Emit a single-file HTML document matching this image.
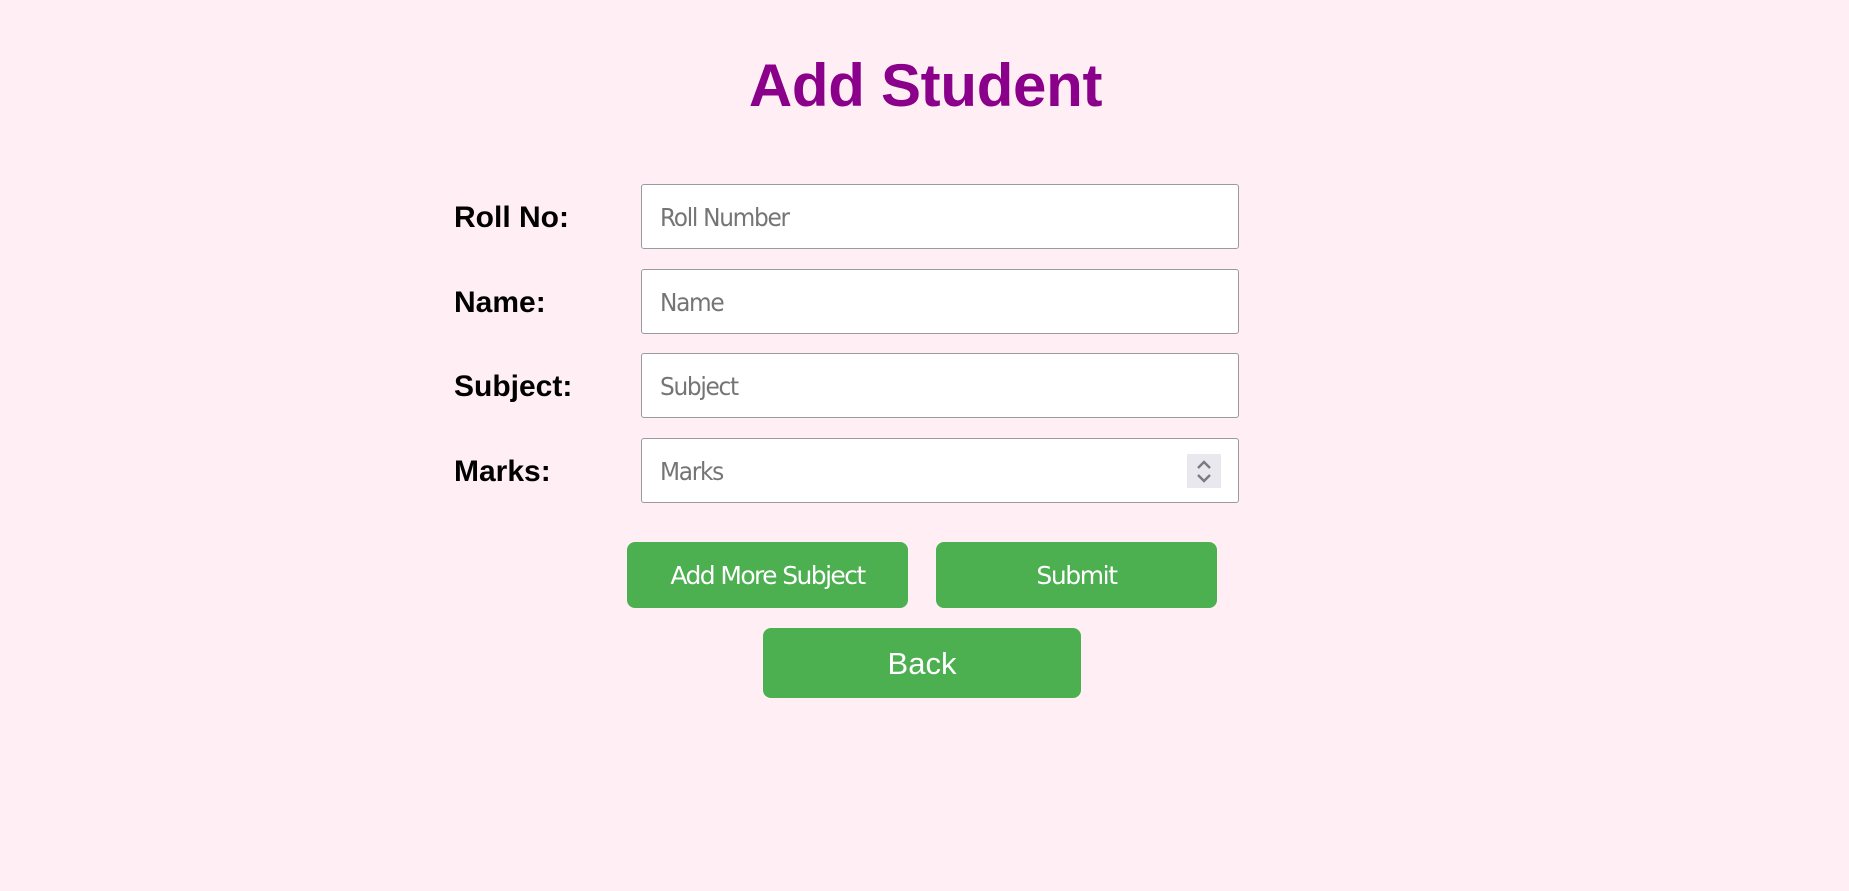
<!DOCTYPE html>
<html><head><meta charset="utf-8"><style>
html,body{margin:0;padding:0;width:1849px;height:891px;background:#ffeef4;overflow:hidden;font-family:"Liberation Sans",Arial,sans-serif;}
h1{position:absolute;left:0;width:1849px;top:51px;margin:0;text-align:center;color:#8b008b;font-size:60px;font-weight:bold;line-height:70px;letter-spacing:-0.3px;padding-left:2px;box-sizing:border-box;}
.lbl{position:absolute;left:454px;font-size:30px;font-weight:bold;color:#000;line-height:34px;}
.inp{position:absolute;left:641px;width:596px;height:63px;background:#fff;border:1px solid #9a9aa2;border-radius:3px;}
.inp span{position:absolute;left:18px;top:1px;line-height:63px;font-size:25px;color:#757575;font-family:"DejaVu Sans","Liberation Sans",sans-serif;letter-spacing:-1.4px;transform:scaleX(0.93);transform-origin:left;}
.btn{position:absolute;background:#4caf50;color:#fff;border-radius:8px;text-align:center;}
.spin{position:absolute;left:545px;top:15px;width:34px;height:34px;background:#e8e8ee;}
</style></head><body>
<h1>Add Student</h1>
<div class="lbl" style="top:201px">Roll No:</div>
<div class="lbl" style="top:286px">Name:</div>
<div class="lbl" style="top:370px">Subject:</div>
<div class="lbl" style="top:455px">Marks:</div>
<div class="inp" style="top:184px"><span>Roll Number</span></div>
<div class="inp" style="top:269px"><span>Name</span></div>
<div class="inp" style="top:353px"><span>Subject</span></div>
<div class="inp" style="top:438px"><span>Marks</span>
<div class="spin"><svg width="34" height="34" viewBox="0 0 34 34"><path d="M11 14 L17 8 L23 14 M11 21 L17 27 L23 21" fill="none" stroke="#7a7a85" stroke-width="2.4"/></svg></div></div>
<div class="btn" style="left:627px;top:542px;width:281px;height:66px;line-height:68px;font-size:25px;font-family:'DejaVu Sans',sans-serif;letter-spacing:-1.6px">Add More Subject</div>
<div class="btn" style="left:936px;top:542px;width:281px;height:66px;line-height:68px;font-size:25px;font-family:'DejaVu Sans',sans-serif;letter-spacing:-1.4px">Submit</div>
<div class="btn" style="left:763px;top:628px;width:318px;height:70px;line-height:72px;font-size:31px">Back</div>
</body></html>
